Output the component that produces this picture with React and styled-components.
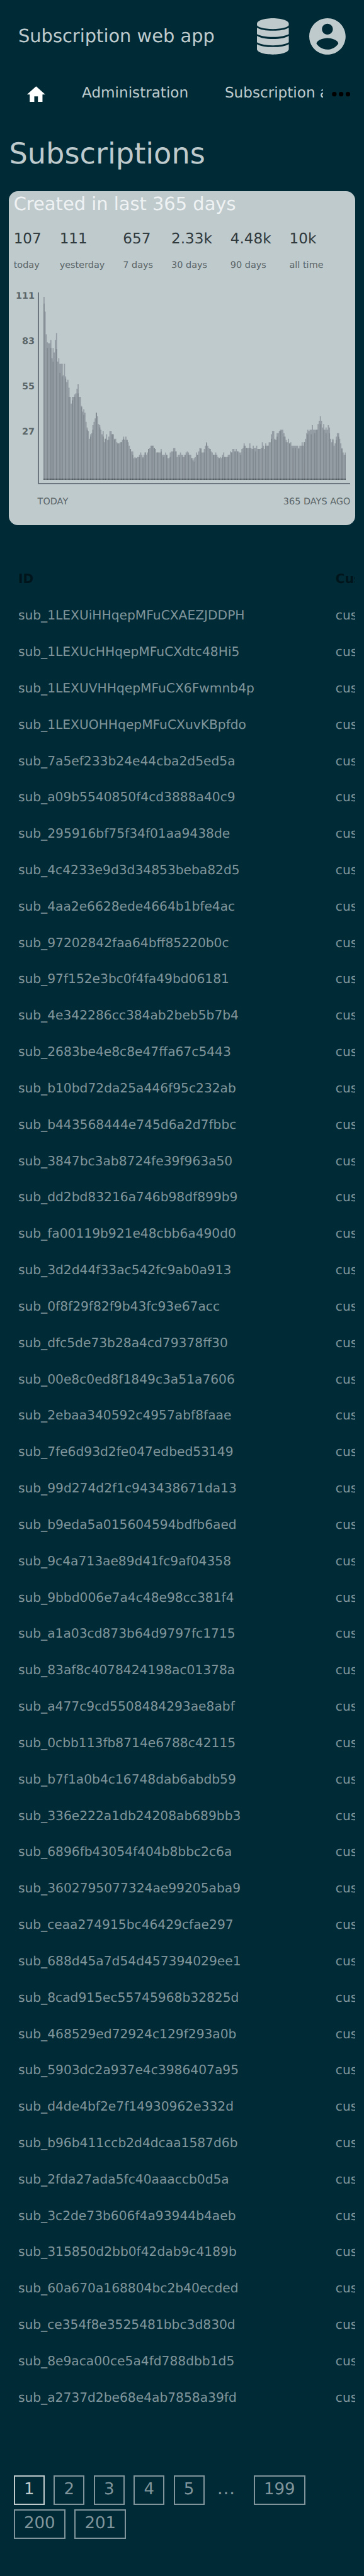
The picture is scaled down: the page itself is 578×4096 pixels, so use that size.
import React from "react";
import styled, { createGlobalStyle } from "styled-components";

// Design units are scaled to the page width and to the page height.
const w = (n) => `${+((n * 578) / 640).toFixed(3)}px`;
const h = (n) => `${+((n * 4096) / 4532).toFixed(3)}px`;

const color = {
  page: "#002b36",
  light: "#bfcacd",
  muted: "#80959b",
  heading: "#00151b",
  cardTitle: "#eff2f3",
  ink: "#303a3d",
  inkSoft: "#5a6567",
  axis: "#6c767e",
  bar: "#959da4",
  barDouble: "#808a90",
  base: "#697279",
  baseDouble: "#4f575d",
};

const GlobalStyle = createGlobalStyle`
  * { box-sizing: border-box; }
  html, body { margin: 0; padding: 0; background: ${color.page}; }
  body {
    font-family: "DejaVu Sans", sans-serif;
    text-rendering: geometricPrecision;
    color: ${color.light};
  }
`;

const Page = styled.div`
  width: 578px;
  height: 4096px;
  overflow: hidden;
  background: ${color.page};
`;

const Header = styled.header`
  display: flex;
  align-items: center;
  height: ${h(128)};
  padding: 0 ${w(32)};
`;

const AppName = styled.div`
  flex: 1;
  font-size: ${w(32)};
  line-height: 1;
`;

const HeaderIcons = styled.div`
  display: flex;
  gap: ${w(36)};
  svg { display: block; height: ${w(64)}; fill: ${color.light}; }
`;

const Nav = styled.nav`
  display: flex;
  align-items: center;
  height: ${h(76)};
  padding-left: ${w(44.8)};
`;

const NavIcon = styled.svg`
  display: block;
  flex: none;
  width: ${(p) => w(p.$size)};
  height: ${(p) => w(p.$size)};
  fill: ${(p) => p.$fill};
`;

const NavLinks = styled.div`
  display: flex;
  gap: ${w(64)};
  width: ${w(424)};
  margin-left: ${w(60.8)};
  margin-right: ${w(8)};
  padding-bottom: ${h(4)};
  overflow: hidden;
  white-space: nowrap;
  font-size: ${w(25.6)};
  line-height: ${h(40)};
`;

const Title = styled.h1`
  height: ${h(132)};
  margin: 0;
  padding-top: 1px;
  padding-left: ${w(16)};
  font-size: ${w(51.2)};
  font-weight: 400;
  line-height: ${h(132)};
`;

const Card = styled.section`
  height: ${h(588)};
  margin: 0 ${w(16)};
  padding: 0 ${w(8)};
  border-radius: ${w(16)};
  background: ${color.light};
`;

const CardTitle = styled.h2`
  margin: 0;
  font-size: ${w(32)};
  font-weight: 400;
  line-height: ${h(46)};
  color: ${color.cardTitle};
`;

const Stats = styled.div`
  display: flex;
  gap: ${w(32)};
  margin-top: ${h(19)};
`;

const StatValue = styled.div`
  font-size: ${w(25.6)};
  line-height: ${h(42)};
  color: ${color.ink};
`;

const StatLabel = styled.div`
  font-size: ${w(16)};
  line-height: ${h(49)};
  color: ${color.inkSoft};
`;

const Chart = styled.div`
  display: grid;
  grid-template-columns: ${w(42)} 1fr;
  margin-top: ${h(22)};
`;

const YAxis = styled.div`
  padding-top: 1px;
  padding-right: ${w(5)};
  height: ${h(338)};
  text-align: right;
  font-size: ${w(16)};
  font-weight: 700;
  color: ${color.inkSoft};
`;

const YTick = styled.div`
  height: ${h(80)};
  line-height: ${h(12.4)};
`;

const Plot = styled.div`
  height: ${h(338)};
  padding: ${h(8)} ${w(8)} ${h(6)};
  border-left: 2px solid ${color.axis};
  border-bottom: 2px solid ${color.axis};
  svg { display: block; width: 100%; height: 100%; }
`;

const XAxis = styled.div`
  grid-column: 2;
  display: flex;
  justify-content: space-between;
  font-size: ${w(16)};
  line-height: ${h(62)};
  text-transform: uppercase;
  color: ${color.inkSoft};
`;

const Table = styled.div`
  margin: ${h(63.4)} ${w(16)} 0;
  overflow: hidden;
  font-size: ${w(22.4)};
  white-space: nowrap;
`;

const Row = styled.div`
  display: grid;
  grid-template-columns: ${w(558)} ${w(300)};
  height: ${h(64)};
  padding-left: ${w(16)};
  line-height: ${h(64)};
  font-weight: ${(p) => (p.$head ? 700 : 400)};
  color: ${(p) => (p.$head ? color.heading : color.muted)};
`;

const Pager = styled.div`
  display: flex;
  flex-wrap: wrap;
  gap: ${h(8)} ${w(16)};
  margin: ${h(104.6)} ${w(24)} 0;
  font-size: ${w(28.8)};
`;

const PageLink = styled.a`
  height: ${h(52)};
  padding: 0 calc(${w(18)} - 2px);
  border: 2px solid currentColor;
  line-height: calc(${h(49)} - 4px);
  color: ${(p) => (p.$current ? color.light : color.muted)};
`;

const Ellipsis = styled.span`
  width: ${w(54.4)};
  padding-left: ${w(6)};
  font-size: ${w(32)};
  line-height: ${h(46)};
  color: ${color.muted};
`;

const stats = [
  ["107", "today"],
  ["111", "yesterday"],
  ["657", "7 days"],
  ["2.33k", "30 days"],
  ["4.48k", "90 days"],
  ["10k", "all time"],
];

// One entry per plotted column; "a/b" is a column shared by two days.
const columns = `
161/155 148 128 121/116 120 120 123/116 107 116/104 112 123 129/115 104 107 102/94 102 102/91 92 102
91/89 86 88 81/73 73 67 73/70 73 75/73 76 80 84/76 73 73 65/64 60 62/57 59 51 46/44 43 36 40/38 41
48/44 51 54 59/59 56 49 48/46 44 40 43/38 33 36/36 40 35 38/35 43 43 40/40 40 36/35 36 33 32/32 32 33
33/33 35 38/36 35 38 35/35 33 30 27/27 25 25/22 19 20 19/19 20 20 22/20 24 22 20/19 22 24/24 22 24
27/27 28 30 30/30 30 28/28 27 24 24/24 24 24 27/25 22 22/20 22 24 22/22 19 19 24/20 25 25 28/25 28
25/25 20 22 22/20 24 22 22/20 20 22/22 24 25 24/22 22 22 19/19 17 19/16 20 24 22/22 25 28 28/27 24 24
27/24 30 33/32 30 28 27/27 25 24 22/22 22 24/22 22 20 19/19 20 19 22/20 24 20/20 20 20 22/20 22 25
24/24 27 27 25/25 27 25/25 25 24 24/22 27 28 32/30 30 28/28 28 28 32/28 28 27 30/27 28 28/25 30 27
27/27 27 28 33/28 30 27 32/30 30 30/30 33 33 40/36 43 43 36/35 35 41/38 41 43 44/43 44 44 41/38 38
35/33 33 36 32/32 33 30 30/28 30 30/28 30 30 28/27 30 30 33/30 30 33/33 36 41 44/40 43 44 44/40 48 44
44/41 44 44/44 49 52 56/49 52 46 49/44 44 46/41 44 48 46/41 36 33 36/35 30 32 38/35 41 41/38 36 32
28/27 24 22 24/22
`
  .trim()
  .split(/\s+/)
  .map((c) => c.split("/").map(Number));

const H = 161;
const outline =
  `M0 ${H}` + columns.map(([a], i) => `V${H - a}H${i + 1}`).join("") + `V${H}Z`;
const shared = columns
  .map(([, b], i) => (b ? `M${i} ${H}V${H - b}h1V${H}Z` : ""))
  .join("");
const sharedBase = columns
  .map(([, b], i) => (b ? `M${i} ${H}v-1h1v1Z` : ""))
  .join("");

const ids = `
1LEXUiHHqepMFuCXAEZJDDPH 1LEXUcHHqepMFuCXdtc48Hi5 1LEXUVHHqepMFuCX6Fwmnb4p 1LEXUOHHqepMFuCXuvKBpfdo
7a5ef233b24e44cba2d5ed5a a09b5540850f4cd3888a40c9 295916bf75f34f01aa9438de 4c4233e9d3d34853beba82d5
4aa2e6628ede4664b1bfe4ac 97202842faa64bff85220b0c 97f152e3bc0f4fa49bd06181 4e342286cc384ab2beb5b7b4
2683be4e8c8e47ffa67c5443 b10bd72da25a446f95c232ab b443568444e745d6a2d7fbbc 3847bc3ab8724fe39f963a50
dd2bd83216a746b98df899b9 fa00119b921e48cbb6a490d0 3d2d44f33ac542fc9ab0a913 0f8f29f82f9b43fc93e67acc
dfc5de73b28a4cd79378ff30 00e8c0ed8f1849c3a51a7606 2ebaa340592c4957abf8faae 7fe6d93d2fe047edbed53149
99d274d2f1c943438671da13 b9eda5a015604594bdfb6aed 9c4a713ae89d41fc9af04358 9bbd006e7a4c48e98cc381f4
a1a03cd873b64d9797fc1715 83af8c4078424198ac01378a a477c9cd5508484293ae8abf 0cbb113fb8714e6788c42115
b7f1a0b4c16748dab6abdb59 336e222a1db24208ab689bb3 6896fb43054f404b8bbc2c6a 3602795077324ae99205aba9
ceaa274915bc46429cfae297 688d45a7d54d457394029ee1 8cad915ec55745968b32825d 468529ed72924c129f293a0b
5903dc2a937e4c3986407a95 d4de4bf2e7f14930962e332d b96b411ccb2d4dcaa1587d6b 2fda27ada5fc40aaaccb0d5a
3c2de73b606f4a93944b4aeb 315850d2bb0f42dab9c4189b 60a670a168804bc2b40ecded ce354f8e3525481bbc3d830d
8e9aca00ce5a4fd788dbb1d5 a2737d2be68e4ab7858a39fd
`
  .trim()
  .split(/\s+/);

const DatabaseIcon = () => (
  <svg viewBox="0 0 56 64">
    <path d="M28 0C43 0 56 4.2 56 9.6V12C56 15.5 44 19 28 19S0 15.5 0 12V9.6C0 4.2 13 0 28 0Z" />
    <path d="M0 16.6C5 20 15.5 22 28 22S51 20 56 16.6V28C51 31 41 33 28 33S5 31 0 28Z" />
    <path d="M0 31C5 34.4 15.5 36.6 28 36.6S51 34.4 56 31V42.4C51 45.6 41 47.8 28 47.8S5 45.6 0 42.4Z" />
    <path d="M0 45.6C5 49 15.5 50.8 28 50.8S51 49 56 45.6V54.4C56 59.8 43 64 28 64S0 59.8 0 54.4Z" />
  </svg>
);

const AccountIcon = () => (
  <svg viewBox="2 2 20 20">
    <path d="M12 2C6.48 2 2 6.48 2 12s4.48 10 10 10 10-4.48 10-10S17.52 2 12 2zm0 3c1.66 0 3 1.34 3 3s-1.34 3-3 3-3-1.34-3-3 1.34-3 3-3zm0 14.2c-2.5 0-4.71-1.28-6-3.22.03-1.99 4-3.08 6-3.08 1.99 0 5.97 1.09 6 3.08-1.29 1.94-3.5 3.22-6 3.22z" />
  </svg>
);

export default function App() {
  return (
    <>
      <GlobalStyle />
      <Page>
        <Header>
          <AppName>Subscription web app</AppName>
          <HeaderIcons>
            <DatabaseIcon />
            <AccountIcon />
          </HeaderIcons>
        </Header>

        <Nav>
          <NavIcon viewBox="0 0 24 24" $size={38.4} $fill="#fff">
            <path d="M10 20v-6h4v6h5v-8h3L12 3 2 12h3v8z" />
          </NavIcon>
          <NavLinks>
            <span>Administration</span>
            <span>Subscription administration</span>
          </NavLinks>
          <NavIcon viewBox="0 0 24 24" $size={48} $fill="#000">
            <circle cx="6" cy="12" r="2" />
            <circle cx="12" cy="12" r="2" />
            <circle cx="18" cy="12" r="2" />
          </NavIcon>
        </Nav>

        <Title>Subscriptions</Title>

        <Card>
          <CardTitle>Created in last 365 days</CardTitle>
          <Stats>
            {stats.map(([value, label]) => (
              <div key={label}>
                <StatValue>{value}</StatValue>
                <StatLabel>{label}</StatLabel>
              </div>
            ))}
          </Stats>
          <Chart>
            <YAxis>
              {[111, 83, 55, 27].map((n) => (
                <YTick key={n}>{n}</YTick>
              ))}
            </YAxis>
            <Plot>
              <svg viewBox={`0 0 ${columns.length} ${H}`} preserveAspectRatio="none">
                <path d={outline} fill={color.bar} />
                <path d={shared} fill={color.barDouble} />
                <rect y={H - 1} width={columns.length} height="1" fill={color.base} />
                <path d={sharedBase} fill={color.baseDouble} />
              </svg>
            </Plot>
            <XAxis>
              <span>Today</span>
              <span>365 days ago</span>
            </XAxis>
          </Chart>
        </Card>

        <Table>
          <Row $head>
            <span>ID</span>
            <span>Customer</span>
          </Row>
          {ids.map((id) => (
            <Row key={id}>
              <span>sub_{id}</span>
              <span>cus_</span>
            </Row>
          ))}
        </Table>

        <Pager>
          <PageLink $current>1</PageLink>
          <PageLink>2</PageLink>
          <PageLink>3</PageLink>
          <PageLink>4</PageLink>
          <PageLink>5</PageLink>
          <Ellipsis>…</Ellipsis>
          <PageLink>199</PageLink>
          <PageLink>200</PageLink>
          <PageLink>201</PageLink>
        </Pager>
      </Page>
    </>
  );
}
